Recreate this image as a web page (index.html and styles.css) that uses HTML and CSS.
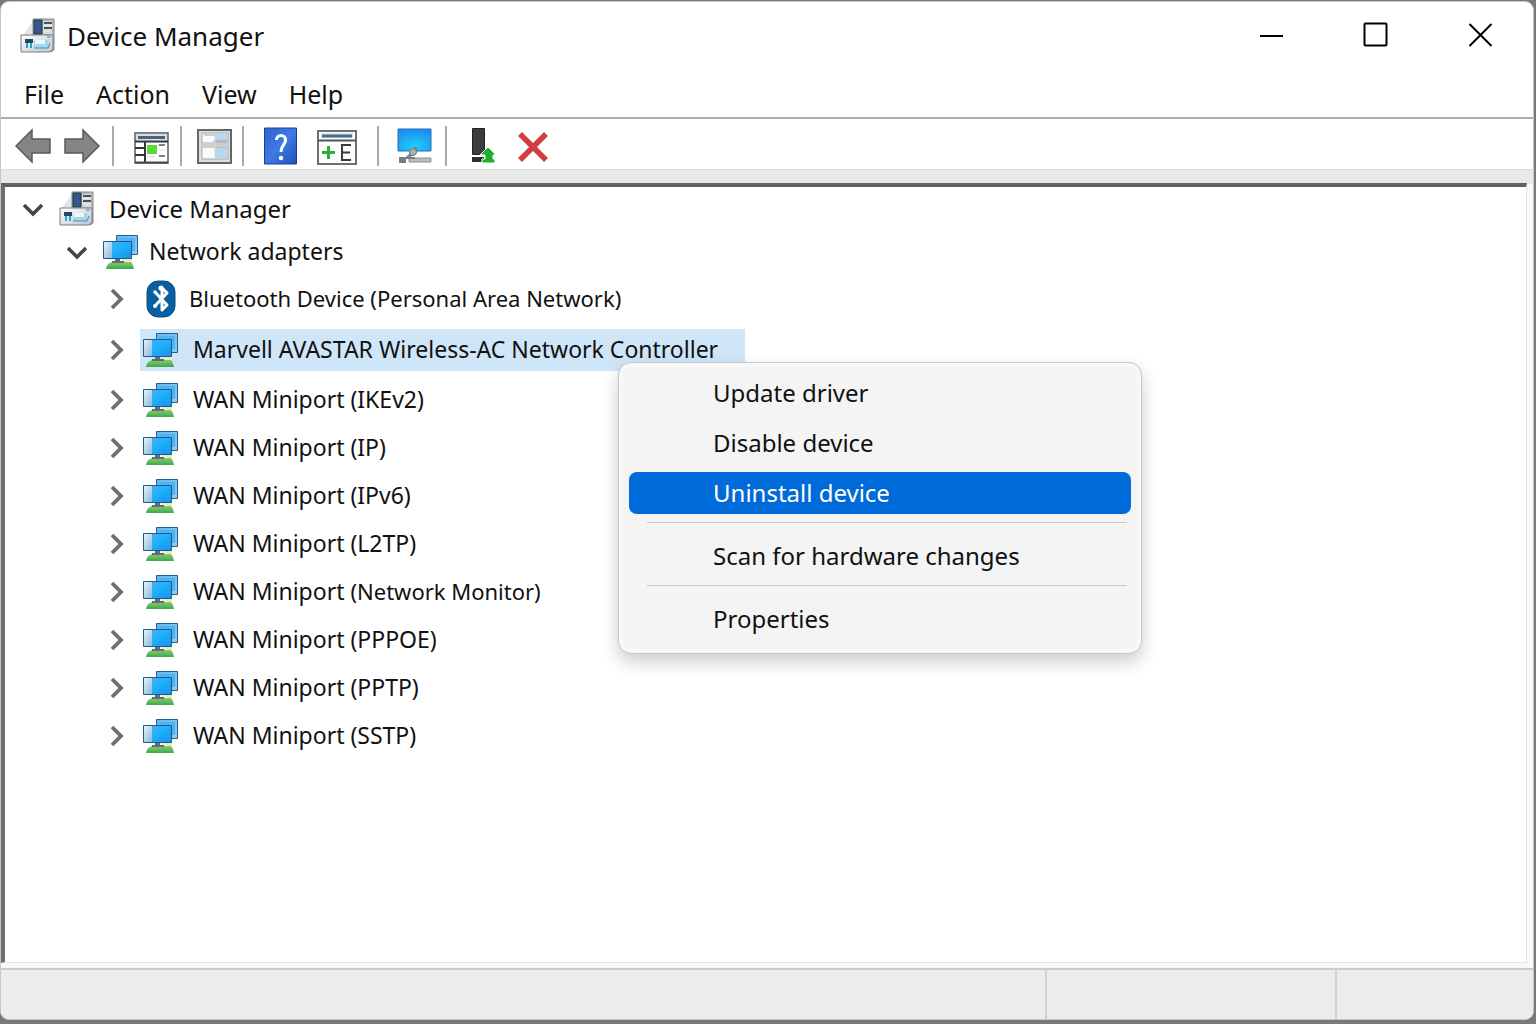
FILE: index.html
```html
<!DOCTYPE html>
<html lang="en">
<head>
  <meta charset="UTF-8">
  <meta name="viewport" content="width=device-width, initial-scale=1.0">
  <title>Device Manager</title>
  <link rel="stylesheet" href="styles.css">
</head>
<body>
  <!-- shared icons -->
  <svg class="sprite" aria-hidden="true">
    <defs>
      <linearGradient id="screen" x1="0" y1="0" x2="1" y2="1">
        <stop offset="0" stop-color="#49b4f4"/>
        <stop offset="0.5" stop-color="#1fb0fb"/>
        <stop offset="1" stop-color="#1a90ea"/>
      </linearGradient>
      <linearGradient id="backscreen" x1="0" y1="0" x2="1" y2="1">
        <stop offset="0" stop-color="#62b8f0"/>
        <stop offset="1" stop-color="#8cccf5"/>
      </linearGradient>
      <linearGradient id="paleside" x1="0" y1="0" x2="1" y2="1">
        <stop offset="0" stop-color="#e4f0fa"/>
        <stop offset="1" stop-color="#8db8de"/>
      </linearGradient>
      <linearGradient id="grass" x1="0" y1="0" x2="0" y2="1">
        <stop offset="0" stop-color="#93cf78"/>
        <stop offset="1" stop-color="#3fa648"/>
      </linearGradient>
      <linearGradient id="metal" x1="0" y1="0" x2="1" y2="1">
        <stop offset="0" stop-color="#ffffff"/>
        <stop offset="1" stop-color="#bfc5c9"/>
      </linearGradient>
      <radialGradient id="glow" cx="0.5" cy="0.8" r="0.8">
        <stop offset="0" stop-color="#1fd0f8"/>
        <stop offset="1" stop-color="#1e8cf0"/>
      </radialGradient>
      <linearGradient id="helpblue" x1="0" y1="0" x2="1" y2="1">
        <stop offset="0" stop-color="#2f62d0"/>
        <stop offset="0.5" stop-color="#3f7ae6"/>
        <stop offset="1" stop-color="#1f50b8"/>
      </linearGradient>
      <linearGradient id="btblue" x1="0" y1="0" x2="0" y2="1">
        <stop offset="0" stop-color="#0b5ea0"/>
        <stop offset="1" stop-color="#04609f"/>
      </linearGradient>
    </defs>

    <symbol id="computer" viewBox="0 0 36 36">
      <path d="M13 3 3 17h10z" fill="#e3e5e6"/>
      <path d="M13 1h21v31l-3 2V18H13z" fill="#b4babc" stroke="#858b8e"/>
      <path d="M14 2h8v14h-8z" fill="#35588a" stroke="#22354f"/>
      <path d="M23 3h9v13h-9z" fill="#d3d8da"/>
      <path d="M24 5h8M24 10h8" stroke="#4a5459" stroke-width="2"/>
      <path d="M24 7.500h8M24 13h6" stroke="#f4f6f6"/>
      <path d="M1 17h32v14l-3 3H1z" fill="url(#metal)" stroke="#777d80"/>
      <path d="M29 18v15" stroke="#c9cfd2"/>
      <path d="M27 19h4" stroke="#4b86ad"/>
      <path d="M5 21h8v4H5z" fill="#1f4a66"/>
      <path d="M6 25h2v5H6zM10 25h2v5h-2z" fill="#25a5c9"/>
      <path d="M14 22h14v8H14z" fill="#a5d5ee"/>
      <path d="M15 22h10v4H15z" fill="#eef7fb"/>
      <path d="M14 30h14l2-5" fill="none" stroke="#458eb6"/>
    </symbol>

    <symbol id="network" viewBox="0 0 36 36">
      <path d="M13.500 1.500h21v19h-21z" fill="url(#backscreen)" stroke="#245f94"/>
      <path d="M16 4h16v13H16z" fill="#50b2f2"/>
      <path d="M3 35c1-6 5-8 14-8h8c4 0 5 4 6 8z" fill="url(#grass)"/>
      <path d="M19 25h10v3H19z" fill="#eee9b5"/>
      <path d="M0.500 7.500h28v17h-28z" fill="url(#screen)" stroke="#1d5a8c"/>
      <path d="M1 8h8v16H1z" fill="url(#paleside)"/>
      <path d="M12 25h5v2h4v2H9v-2h3z" fill="#586f79"/>
    </symbol>

    <symbol id="bluetooth" viewBox="0 0 30 38">
      <rect x="1" y="1" width="28" height="36" rx="11" fill="url(#btblue)" stroke="#0a4f87"/>
      <path d="M9 12l12 13-5 5V8l5 5L9 26" fill="none" stroke="#fff" stroke-width="3" stroke-linejoin="round"/>
      <circle cx="15" cy="8" r="2.600" fill="#fff"/>
      <circle cx="9" cy="12" r="1.800" fill="#fff"/>
      <circle cx="9" cy="26" r="2" fill="#fff"/>
    </symbol>

    <symbol id="right" viewBox="0 0 24 24">
      <path d="M7 3l9 9-9 9" fill="none" stroke="#6e6e6e" stroke-width="3.800"/>
    </symbol>
    <symbol id="down" viewBox="0 0 24 24">
      <path d="M3 8l9 9 9-9" fill="none" stroke="#454545" stroke-width="3.500"/>
    </symbol>
  </svg>

  <div class="window">
    <header class="titlebar">
      <svg class="icon"><use href="#computer"/></svg>
      <h1>Device Manager</h1>
      <div class="controls">
        <button aria-label="Minimize"><svg viewBox="0 0 26 26"><path d="M2 14h23" stroke="#000" stroke-width="2"/></svg></button>
        <button aria-label="Maximize"><svg viewBox="0 0 26 26"><rect x="1.500" y="1.500" width="22" height="22" rx="1" fill="none" stroke="#000" stroke-width="2"/></svg></button>
        <button aria-label="Close"><svg viewBox="0 0 26 26"><path d="M1.500 2l22 22M23.500 2l-22 22" stroke="#000" stroke-width="2"/></svg></button>
      </div>
    </header>

    <nav class="menubar">
      <button>File</button>
      <button>Action</button>
      <button>View</button>
      <button>Help</button>
    </nav>

    <div class="toolbar">
      <div class="group first">
        <button aria-label="Back">
          <svg viewBox="0 0 38 38"><path d="M2 19L18 3v9h18v14H18v9z" fill="#858585" stroke="#5a5a5a" stroke-width="1.500"/></svg>
        </button>
        <button aria-label="Forward">
          <svg viewBox="0 0 38 38"><path d="M36 19L20 3v9H2v14h18v9z" fill="#858585" stroke="#5a5a5a" stroke-width="1.500"/></svg>
        </button>
      </div>
      <div class="group">
        <button aria-label="Show console tree">
          <svg viewBox="0 0 38 38">
            <path d="M4 6h33v30H4z" fill="#fff" stroke="#555b60" stroke-width="1.500"/>
            <path d="M5 7h31v6H5z" fill="#d9dde0"/>
            <path d="M7 10.500h27" stroke="#4c6178" stroke-width="3"/>
            <path d="M4 14.500h33" stroke="#2f353a" stroke-width="2"/>
            <path d="M14 15v21M4 21h10M4 28h10" stroke="#33383c" stroke-width="2"/>
            <path d="M4 35.500h33" stroke="#444a4f" stroke-width="2"/>
            <path d="M16 18h10v9H16z" fill="#5fd83c"/>
            <path d="M28 18h6M28 29h6" stroke="#555" stroke-width="1.500"/>
            <path d="M28 23h5M17 30h7" stroke="#ddd"/>
          </svg>
        </button>
      </div>
      <div class="group tight">
        <button aria-label="Properties">
          <svg viewBox="0 0 38 38">
            <path d="M3 3h33v33H3z" fill="#dcdfe0" stroke="#62676a" stroke-width="2"/>
            <path d="M7 6h26v26H7z" fill="#fafafa" stroke="#a3a8ac"/>
            <path d="M20 7h12v9H20zM20 20h12v11H20z" fill="#b8d7f0"/>
            <path d="M9 8h11M18 14h14M8 18h24" stroke="#b49d88"/>
            <path d="M8 16h24M8 20h24" stroke="#9ba5ab"/>
            <path d="M20 7v24" stroke="#d1d8dc"/>
          </svg>
        </button>
      </div>
      <div class="group pair">
        <button aria-label="Help">
          <svg viewBox="0 0 38 38">
            <path d="M3.500 1h32v36h-32z" fill="url(#helpblue)" stroke="#1c3f94"/>
            <path d="M15.500 13c0-6 9-6 9 0 0 5-4.500 5-4.500 12" fill="none" stroke="#fff" stroke-width="3"/>
            <circle cx="20" cy="31" r="2.200" fill="#fff"/>
          </svg>
        </button>
        <button aria-label="Export list">
          <svg viewBox="0 0 40 38">
            <path d="M1 4h38v33H1z" fill="#fdfdfd" stroke="#6b7073" stroke-width="2"/>
            <path d="M4 6h32v5H4z" fill="#dfe4e7"/>
            <path d="M5 9h30" stroke="#43708f" stroke-width="3"/>
            <path d="M1 13.500h38" stroke="#4f5559" stroke-width="2"/>
            <path d="M5 25.500h13M11.500 19v13" stroke="#2fae35" stroke-width="3"/>
            <path d="M34 18h-9v15h9M25 25.500h8" fill="none" stroke="#3b3b3b" stroke-width="2"/>
          </svg>
        </button>
      </div>
      <div class="group">
        <button aria-label="Scan for hardware changes">
          <svg viewBox="0 0 38 38">
            <path d="M2 2h33v22H2z" fill="url(#glow)" stroke="#2a6fb0"/>
            <path d="M13 31h22v4H13z" fill="#b9bdbf" stroke="#8c9193"/>
            <path d="M3 30h7v6H3z" fill="#777d80"/>
            <path d="M9 31h10" stroke="#777d80" stroke-width="2"/>
            <path d="M11 31l8-7M17 27l3-7" stroke="#7b8386" stroke-width="3"/>
            <circle cx="17" cy="25" r="3.500" fill="#aab2b5" stroke="#6f777a"/>
          </svg>
        </button>
      </div>
      <div class="group last">
        <button aria-label="Update driver">
          <svg viewBox="0 0 38 38">
            <path d="M8.500 1.500h12v26h-12z" fill="#3a3d3f" stroke="#1f2122"/>
            <path d="M8 30h12v5H8z" fill="#2c2f30"/>
            <path d="M24 20l8 8h-3v4h2v4H18v-4h3v-4h-5z" fill="#1fae2c" stroke="#fff"/>
          </svg>
        </button>
        <button aria-label="Uninstall device">
          <svg viewBox="0 0 38 38"><path d="M7 7l26 26M33 7L7 33" stroke="#d13c3e" stroke-width="5.500"/></svg>
        </button>
      </div>
    </div>

    <main class="panel">
      <ul class="tree">
        <li class="root">
          <div class="row">
            <button class="toggle" aria-label="Collapse"><svg><use href="#down"/></svg></button>
            <span class="label"><svg class="icon"><use href="#computer"/></svg>Device Manager</span>
          </div>
          <ul>
            <li class="category">
              <div class="row">
                <button class="toggle" aria-label="Collapse"><svg><use href="#down"/></svg></button>
                <span class="label near"><svg class="icon"><use href="#network"/></svg>Network adapters</span>
              </div>
              <ul class="devices">
                <li>
                  <div class="row bluetooth">
                    <button class="toggle" aria-label="Expand"><svg><use href="#right"/></svg></button>
                    <span class="label near"><svg class="icon"><use href="#bluetooth"/></svg>Bluetooth Device (Personal Area Network)</span>
                  </div>
                </li>
                <li class="open">
                  <div class="row">
                    <button class="toggle" aria-label="Expand"><svg><use href="#right"/></svg></button>
                    <span class="label selected"><svg class="icon"><use href="#network"/></svg>Marvell AVASTAR Wireless-AC Network Controller</span>
                  </div>
                  <div class="context-menu" role="menu">
                    <button role="menuitem">Update driver</button>
                    <button role="menuitem">Disable device</button>
                    <button role="menuitem" class="active">Uninstall device</button>
                    <hr>
                    <button role="menuitem">Scan for hardware changes</button>
                    <hr>
                    <button role="menuitem">Properties</button>
                  </div>
                </li>
                <li>
                  <div class="row">
                    <button class="toggle" aria-label="Expand"><svg><use href="#right"/></svg></button>
                    <span class="label"><svg class="icon"><use href="#network"/></svg>WAN Miniport (IKEv2)</span>
                  </div>
                </li>
                <li>
                  <div class="row">
                    <button class="toggle" aria-label="Expand"><svg><use href="#right"/></svg></button>
                    <span class="label"><svg class="icon"><use href="#network"/></svg>WAN Miniport (IP)</span>
                  </div>
                </li>
                <li>
                  <div class="row">
                    <button class="toggle" aria-label="Expand"><svg><use href="#right"/></svg></button>
                    <span class="label"><svg class="icon"><use href="#network"/></svg>WAN Miniport (IPv6)</span>
                  </div>
                </li>
                <li>
                  <div class="row">
                    <button class="toggle" aria-label="Expand"><svg><use href="#right"/></svg></button>
                    <span class="label"><svg class="icon"><use href="#network"/></svg>WAN Miniport (L2TP)</span>
                  </div>
                </li>
                <li>
                  <div class="row">
                    <button class="toggle" aria-label="Expand"><svg><use href="#right"/></svg></button>
                    <span class="label"><svg class="icon"><use href="#network"/></svg><span>WAN Miniport <small>(Network Monitor)</small></span></span>
                  </div>
                </li>
                <li>
                  <div class="row">
                    <button class="toggle" aria-label="Expand"><svg><use href="#right"/></svg></button>
                    <span class="label"><svg class="icon"><use href="#network"/></svg>WAN Miniport (PPPOE)</span>
                  </div>
                </li>
                <li>
                  <div class="row">
                    <button class="toggle" aria-label="Expand"><svg><use href="#right"/></svg></button>
                    <span class="label"><svg class="icon"><use href="#network"/></svg>WAN Miniport (PPTP)</span>
                  </div>
                </li>
                <li>
                  <div class="row">
                    <button class="toggle" aria-label="Expand"><svg><use href="#right"/></svg></button>
                    <span class="label"><svg class="icon"><use href="#network"/></svg>WAN Miniport (SSTP)</span>
                  </div>
                </li>
              </ul>
            </li>
          </ul>
        </li>
      </ul>
    </main>

    <footer class="statusbar">
      <div class="cell"></div>
      <div class="cell medium"></div>
      <div class="cell small"></div>
    </footer>
  </div>
</body>
</html>
```
FILE: styles.css
```css
* {
  box-sizing: border-box;
}

body {
  margin: 0;
  background: #77797b;
  color: #111;
  font-family: "Noto Sans", "Open Sans", sans-serif;
  font-size: 24px;
}

button {
  margin: 0;
  padding: 0;
  border: 0;
  background: none;
  color: inherit;
  font: inherit;
}

svg {
  display: block;
  flex: none;
}

ul {
  margin: 0;
  padding: 0;
  list-style: none;
}

.sprite {
  position: absolute;
  width: 0;
  height: 0;
}

.icon {
  width: 36px;
  height: 36px;
}

.window {
  display: flex;
  flex-direction: column;
  min-height: calc(100vh - 5px);
  margin: 1px 2px 4px 0;
  border: 1px solid #c4c6c8;
  border-radius: 9px;
  background: #fff;
  overflow: hidden;
}

/* title bar */
.titlebar {
  display: flex;
  align-items: center;
  height: 68px;
  padding-left: 19px;
}

.titlebar h1 {
  flex: 1;
  margin: 0 0 0 11px;
  font-size: 26px;
  font-weight: 400;
}

.controls {
  display: flex;
  align-self: flex-start;
}

.controls button {
  display: flex;
  align-items: center;
  justify-content: center;
  width: 105px;
  height: 66px;
}

.controls svg {
  width: 26px;
  height: 26px;
}

/* menu bar */
.menubar {
  display: flex;
  gap: 32px;
  height: 49px;
  padding-left: 23px;
  border-bottom: 2px solid #aeb0b1;
  font-size: 25px;
}

/* toolbar */
.toolbar {
  display: flex;
  align-items: center;
  height: 51px;
  padding-top: 3px;
  border-bottom: 1px solid #dcdcdc;
}

.group {
  display: flex;
  align-items: center;
  height: 40px;
  padding: 0 11px 0 17px;
  border-right: 2px solid #a9a9a9;
}

.group.first {
  gap: 11px;
  padding-left: 13px;
}

.group.tight {
  padding: 0 9px 0 13px;
}

.group.pair {
  gap: 18px;
  padding-right: 20px;
}

.group.last {
  gap: 11px;
  border: 0;
}

.group svg {
  width: 38px;
  height: 38px;
}

.group.pair button + button svg {
  width: 40px;
}

/* device tree */
.panel {
  flex: 1;
  display: flex;
  padding: 13px 6px 5px 0;
  background: linear-gradient(#e9e9e9 14px, #f8f8f8 14px);
}

.tree {
  flex: 1;
  padding: 1px 0 0 16px;
  background: #fff;
  border-style: solid;
  border-width: 4px 1px 1px 4px;
  border-color: #5f6163 #e4e4e4 #e4e4e4 #6d6f71;
}

.root > ul {
  padding-left: 44px;
  font-size: 23px;
}

.devices {
  padding-left: 40px;
}

.row {
  display: flex;
  align-items: center;
  height: 48px;
}

.root > .row {
  height: 42px;
}

.category > .row {
  height: 44px;
}

.row.bluetooth {
  height: 50px;
  font-size: 22px;
}

.toggle svg {
  width: 24px;
  height: 24px;
}

.label {
  display: flex;
  align-items: center;
  gap: 14px;
  height: 42px;
  margin-left: 11px;
  padding: 0 27px 2px 3px;
  white-space: nowrap;
}

.label.near {
  gap: 10px;
}

.label .icon {
  margin-top: 2px;
}

.label small {
  font-size: 22px;
}

.bluetooth .icon {
  height: 38px;
}

.selected {
  background: #cfe6f8;
}

/* context menu */
.open {
  position: relative;
}

.open > .row {
  height: 52px;
}

.context-menu {
  position: absolute;
  z-index: 1;
  top: 38px;
  left: 513px;
  width: 524px;
  padding: 9px 10px 5px;
  border: 1px solid #c6c6c6;
  border-radius: 13px;
  background: #f4f4f4;
  box-shadow: inset 0 0 0 4px #f8f8f8, 0 8px 18px rgba(0, 0, 0, 0.2);
  font-size: 24px;
}

.context-menu button {
  display: block;
  width: 100%;
  height: 42px;
  margin-bottom: 8px;
  padding: 0 0 2px 84px;
  border-radius: 8px;
  text-align: left;
}

.context-menu .active {
  background: #006bd8;
  color: #fff;
}

.context-menu hr {
  height: 1px;
  margin: 0 4px 12px 18px;
  border: 0;
  background: #c8c8c8;
}

/* status bar */
.statusbar {
  display: flex;
  height: 51px;
  border-top: 2px solid #c9cccb;
  background: #ececec;
}

.cell {
  flex: 1;
}

.cell.medium,
.cell.small {
  flex: none;
  width: 290px;
  border-left: 2px solid #cfd0d0;
}

.cell.small {
  width: 198px;
}
```
